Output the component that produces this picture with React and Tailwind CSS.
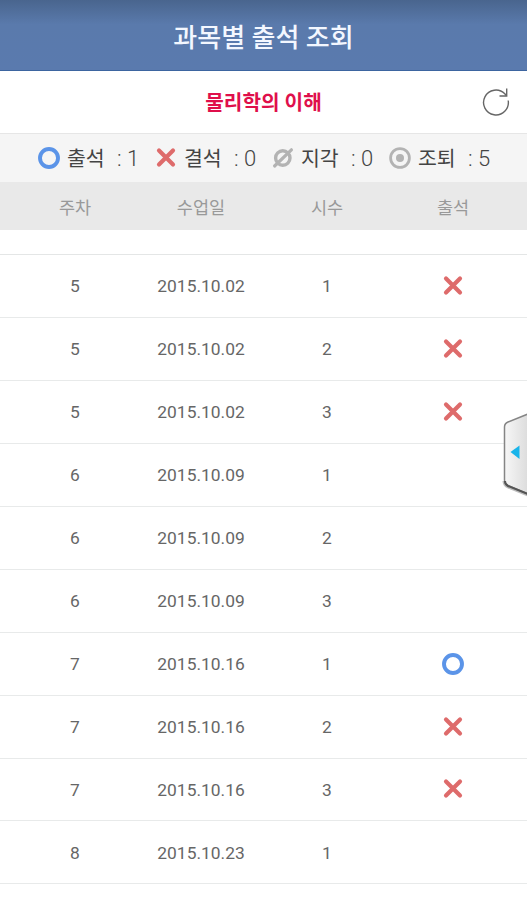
const summary = [
    { status: 'present', label: '출석', count: 1 },
    { status: 'absent', label: '결석', count: 0 },
    { status: 'late', label: '지각', count: 0 },
    { status: 'early', label: '조퇴', count: 5 },
];

const columns = ['주차', '수업일', '시수', '출석'];

const rows = [
    { week: 5, date: '2015.10.02', period: 1, status: 'absent' },
    { week: 5, date: '2015.10.02', period: 2, status: 'absent' },
    { week: 5, date: '2015.10.02', period: 3, status: 'absent' },
    { week: 6, date: '2015.10.09', period: 1 },
    { week: 6, date: '2015.10.09', period: 2 },
    { week: 6, date: '2015.10.09', period: 3 },
    { week: 7, date: '2015.10.16', period: 1, status: 'present' },
    { week: 7, date: '2015.10.16', period: 2, status: 'absent' },
    { week: 7, date: '2015.10.16', period: 3, status: 'absent' },
    { week: 8, date: '2015.10.23', period: 1 },
];

function StatusIcon({ status }) {
    return (
        <svg className="block h-[22px] w-[22px] shrink-0" viewBox="0 0 22 22" fill="none">
            {status === 'present' && <circle cx="11" cy="11" r="9" stroke="#5b94e8" strokeWidth="3.9" />}
            {status === 'absent' && (
                <path d="M4 3.500L18 17.500M18 3.500L4 17.500" stroke="#de6b6b" strokeWidth="4.2" strokeLinecap="round" />
            )}
            {status === 'late' && (
                <>
                    <circle cx="10.8" cy="11" r="7.2" stroke="#b3b3b3" strokeWidth="3.4" />
                    <path d="M2.600 19L19.400 2.800" stroke="#b3b3b3" strokeWidth="3.2" strokeLinecap="round" />
                </>
            )}
            {status === 'early' && (
                <>
                    <circle cx="11" cy="11" r="9.4" stroke="#b3b3b3" strokeWidth="2.8" />
                    <circle cx="11" cy="11" r="4" fill="#b3b3b3" />
                </>
            )}
        </svg>
    );
}

function DrawerHandle() {
    return (
        <svg className="absolute right-0 top-[408px] h-[90px] w-[25px]" viewBox="0 0 25 90" fill="none">
            <defs>
                <linearGradient id="handle" x1="0" y1="0" x2="1" y2="0">
                    <stop offset="0" stopColor="#f7f7f7" />
                    <stop offset="1" stopColor="#dcdcdc" />
                </linearGradient>
            </defs>
            <path d="M26 87L6 79Q2 77 2 73" stroke="#bdbdbd" strokeWidth="3" />
            <path d="M26 6L6 14Q2.500 15.500 2.500 19V72Q2.500 76 6 77.500L26 86Z" fill="url(#handle)" stroke="#858585" strokeWidth="1.5" />
            <path d="M3 73Q3 76.500 6 78L26 86" stroke="#555555" strokeWidth="2" />
            <path d="M8.500 44L17.500 37.500V51Z" fill="#18b4ea" />
        </svg>
    );
}

export default function App() {
    return (
        <div className="relative h-[900px] w-[527px] overflow-hidden bg-white font-['Roboto','Noto_Sans_CJK_KR',sans-serif]">
            <header className="flex h-[71px] items-center justify-center border-b border-[#3d65a0] bg-linear-to-b from-[#49658e] via-[#5a7aac] via-35% to-[#5a7aae] pt-1.5">
                <h1 className="text-[26px] leading-none font-medium text-[#f3f7ff]">과목별 출석 조회</h1>
            </header>

            <div className="relative flex h-[62px] items-center justify-center pt-0.5">
                <h2 className="text-[20.2px] leading-none font-bold text-[#df0f4b]">물리학의 이해</h2>
                <button className="absolute top-[17px] right-[17px]">
                    <svg className="block h-[28px] w-[28px]" viewBox="0 0 28 28" fill="none" stroke="#666666" strokeWidth="1.4">
                        <path d="M26.200 12.500A12.400 12.400 0 1 1 22.800 5.800L24.500 7.800" />
                        <path d="M24.700 0.500V8H17.500" />
                    </svg>
                </button>
            </div>

            <div className="flex h-[49px] items-center border-t border-[#e6e6e6] bg-[#f5f5f5] pl-[38px]">
                {summary.map((item) => (
                    <div key={item.status} className="flex w-[117px] shrink-0 items-center text-[#444444]">
                        <StatusIcon status={item.status} />
                        <span className="ml-[7px] w-[50px] pt-0.5 text-[20.5px] leading-none">{item.label}</span>
                        <span className="pt-0.5 text-[22px] leading-none font-light">: {item.count}</span>
                    </div>
                ))}
            </div>

            <div className="grid h-12 grid-cols-[repeat(4,126px)] items-center bg-[#e9e9e9] pt-1.5 pl-3 text-center text-[17.5px] leading-none text-[#999999]">
                {columns.map((name) => (
                    <div key={name}>{name}</div>
                ))}
            </div>

            <div className="h-[25px] border-b border-[#e4e6e6]" />
            {rows.map((row) => (
                <div
                    key={`${row.date}-${row.period}`}
                    className="grid h-[62.95px] grid-cols-[repeat(4,126px)] items-center border-b border-[#e8eaea] pl-3 text-center text-[17.4px] leading-none text-[#666666]"
                >
                    <div className="pt-0.5">{row.week}</div>
                    <div className="pt-0.5">{row.date}</div>
                    <div className="pt-0.5">{row.period}</div>
                    <div className="flex justify-center">{row.status && <StatusIcon status={row.status} />}</div>
                </div>
            ))}

            <DrawerHandle />
        </div>
    );
}
